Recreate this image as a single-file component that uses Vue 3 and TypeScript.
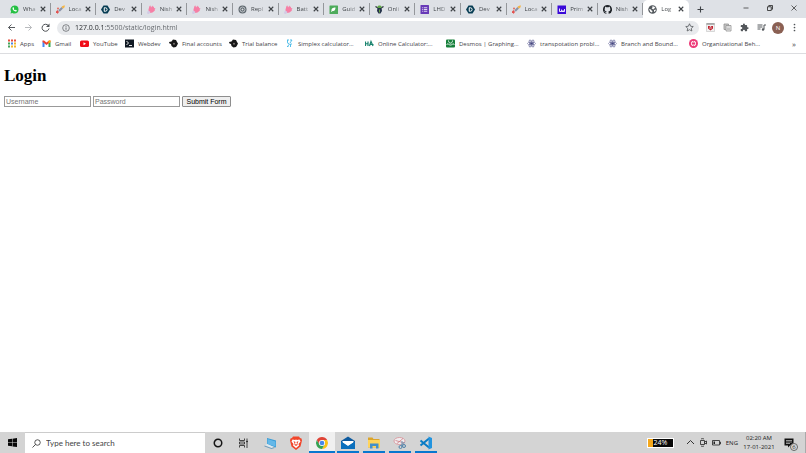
<script setup lang="ts">
import { ref } from 'vue'

interface Entry {
  label: string
  icon: string
}

const tabs: Entry[] = [
  { label: 'Wha', icon: 'whatsapp' },
  { label: 'Loca', icon: 'rocket' },
  { label: 'Dev', icon: 'devpost' },
  { label: 'Nish', icon: 'hand' },
  { label: 'Nish', icon: 'hand' },
  { label: 'Repl', icon: 'replit' },
  { label: 'Batt', icon: 'hand' },
  { label: 'Guid', icon: 'leaf' },
  { label: 'Onli', icon: 'bug' },
  { label: 'LHD', icon: 'forms' },
  { label: 'Dev', icon: 'devpost' },
  { label: 'Loca', icon: 'rocket' },
  { label: 'Prim', icon: 'prime' },
  { label: 'Nish', icon: 'github' },
  { label: 'Log', icon: 'globe' },
]
const activeTab = ref(tabs.length - 1)

const bookmarks: Entry[] = [
  { label: 'Apps', icon: 'apps' },
  { label: 'Gmail', icon: 'gmail' },
  { label: 'YouTube', icon: 'youtube' },
  { label: 'Webdev', icon: 'terminal' },
  { label: 'Final accounts', icon: 'bird' },
  { label: 'Trial balance', icon: 'bird' },
  { label: 'Simplex calculator...', icon: 'simplex' },
  { label: 'Online Calculator:...', icon: 'ha' },
  { label: 'Desmos | Graphing...', icon: 'desmos' },
  { label: 'transpotation probl...', icon: 'atom' },
  { label: 'Branch and Bound...', icon: 'atom' },
  { label: 'Organizational Beh...', icon: 'target' },
]

const extensions: Entry[] = [
  { label: 'Shield', icon: 'shield' },
  { label: 'Copy', icon: 'copy' },
  { label: 'Extensions', icon: 'puzzle' },
  { label: 'Media', icon: 'media' },
]

const tasks = [
  { label: 'Cortana', icon: 'cortana', state: '' },
  { label: 'Task view', icon: 'taskview', state: '' },
  { label: 'This PC', icon: 'pc', state: '' },
  { label: 'Brave', icon: 'brave', state: '' },
  { label: 'Chrome', icon: 'chrome', state: 'open focused' },
  { label: 'Mail', icon: 'mail', state: 'open' },
  { label: 'File Explorer', icon: 'folder', state: 'open' },
  { label: 'Snipping Tool', icon: 'snip', state: 'open' },
  { label: 'Visual Studio Code', icon: 'vscode', state: 'open' },
]

const address = ref('127.0.0.1:5500/static/login.html')
const search = ref('')
const username = ref('')
const password = ref('')
</script>

<template>
  <div class="screen">
    <svg class="sprite" aria-hidden="true">
      <symbol id="whatsapp" viewBox="0 0 18 18"><path fill="#25c043" d="M9 1a8 8 0 0 1 0 16 8 8 0 0 1-4-1l-4 1 1.200-4A8 8 0 0 1 9 1z" /><path fill="#fff" d="M5.500 5l1.800-.5 1 2.300-.9 1.100c.6 1.200 1.500 2 2.800 2.600l1-1.100 2.300 1.100c.2 1.500-1 2.600-2.500 2.500C7.500 12.500 4.800 9 5 6z" /></symbol>
      <symbol id="rocket" viewBox="0 0 18 18"><path fill="#e2524f" d="M0 13l3-3 3 4-3 4-1-2-2 0z" /><path fill="#8a93a8" d="M5 10l6-6 3 3-6 6-1 0-2-2z" /><path fill="#f4b547" d="M11 4c1-2 4-3 7-3-1 3-1 5-4 6z" /><circle cx="4" cy="7" r="2" fill="#e46b5c" /></symbol>
      <symbol id="devpost" viewBox="0 0 18 18"><path fill="#063c53" d="M5 1h8l5 8-5 8H5L0 9z" /><path fill="none" stroke="#fff" stroke-width="2" d="M6.500 5.500h2.200a3.500 3.500 0 0 1 0 7H6.500z" /></symbol>
      <symbol id="hand" viewBox="0 0 18 18"><path fill="#f67fa5" d="M3 9l2-7 2-1 1 4 3-4 1 3 2-1 0 3 3 1-2 3 1 1-5 4-5 1-3-3z" /><path fill="#d3cbe5" d="M0 14l3-3 4 3-3 4H1z" /></symbol>
      <symbol id="replit" viewBox="0 0 18 18"><circle cx="9" cy="9" r="8" fill="#5d666d" /><circle cx="9" cy="9" r="5" fill="none" stroke="#dfe2e5" stroke-width="1.500" /><circle cx="9" cy="9" r="2" fill="#dfe2e5" /></symbol>
      <symbol id="leaf" viewBox="0 0 18 18"><rect x="1" y="1" width="17" height="17" rx="1" fill="#4dab5b" /><path fill="#fff" d="M5 12c-1-5 3-7 8-7 0 5-2 8-6 7l-2 2-1-1z" /></symbol>
      <symbol id="bug" viewBox="0 0 18 18"><path stroke="#252d38" stroke-width="2.500" d="M1 3l5 3M17 3l-5 3" /><path fill="#25334a" d="M5 5h8l1 7-3 5H7l-3-5z" /><path fill="#5fa646" d="M5 3c1-3 7-3 8 0v3H5z" /><path fill="#69a246" d="M8 9h2v6H8z" /></symbol>
      <symbol id="forms" viewBox="0 0 18 18"><rect x="1" y="0" width="17" height="18" rx="1" fill="#6739b7" /><path stroke="#fff" stroke-width="1.600" d="M7.500 5.500h7M7.500 9h7M7.500 12.500h7M4 5.500h1.500M4 9h1.500M4 12.500h1.500" /></symbol>
      <symbol id="prime" viewBox="0 0 18 18"><rect x="1" y="1" width="17" height="17" fill="#3a09d8" /><path fill="none" stroke="#fff" stroke-width="1.800" d="M5 7v6h4V9M9 13h6V8M12 10v3" /></symbol>
      <symbol id="github" viewBox="0 0 16 16"><path fill="#1f2328" d="M8 0a8 8 0 0 0-2.530 15.590c.4.070.55-.17.55-.38v-1.490c-2.230.49-2.700-.94-2.700-.94-.36-.93-.89-1.180-.89-1.180-.73-.5.050-.49.050-.49.810.06 1.230.83 1.230.83.720 1.230 1.880.87 2.330.67.070-.52.280-.88.510-1.080-1.780-.2-3.640-.89-3.640-3.950 0-.87.310-1.590.82-2.150-.08-.2-.36-1.020.08-2.120 0 0 .67-.21 2.200.82a7.600 7.600 0 0 1 4 0c1.530-1.040 2.200-.82 2.200-.82.440 1.100.160 1.920.080 2.120.51.56.82 1.270.82 2.150 0 3.070-1.870 3.750-3.650 3.950.29.25.54.73.54 1.480v2.200c0 .21.150.46.550.38A8 8 0 0 0 8 0z" /></symbol>
      <symbol id="globe" viewBox="0 0 18 18"><circle cx="9" cy="9" r="8.500" fill="#53585d" /><path fill="#fff" d="M2 8l4 1 1 2 2 1-1 3-3-1zM8 3l4 0 3 3-3 1-1 2-4-2 2-1zM12 10l4-1-1 3-3 2z" /></symbol>
      <symbol id="apps" viewBox="0 0 18 18"><path fill="#e84d3d" d="M2 1h4v4H2zM8 1h4v4H8zM14 1h4v4h-4z" /><path fill="#44a45b" d="M2 7h4v4H2zM2 13h4v4H2z" /><path fill="#4c86e7" d="M8 7h4v4H8z" /><path fill="#f0b52a" d="M14 7h4v4h-4zM8 13h4v4H8zM14 13h4v4h-4z" /></symbol>
      <symbol id="gmail" viewBox="0 0 18 18"><path fill="#4285f4" d="M1 5l4 3v8H1z" /><path fill="#34a853" d="M13 8l4-3v11h-4z" /><path fill="#ea4335" d="M1 3h3l5 4 5-4h3v3l-8 6-8-6z" /><path fill="#fbbc04" d="M14 3h3v3l-4 3V4z" /></symbol>
      <symbol id="youtube" viewBox="0 0 18 18"><rect x="0" y="3" width="18" height="13" rx="3" fill="#f00c18" /><path fill="#fff" d="M7 6.500l5 3-5 3z" /></symbol>
      <symbol id="terminal" viewBox="0 0 18 18"><path fill="#111923" d="M0 1h18v16H0z" /><path fill="none" stroke="#fff" stroke-width="1.800" d="M3 4l4 4-4 4M8 13h6" /></symbol>
      <symbol id="bird" viewBox="0 0 18 18"><path fill="#171717" d="M0 6l5-1 3-4 6 1 2 4 2 3-2 4-2 3-5 1-4-3-1-4-3-1z" /><circle cx="10" cy="9.500" r="2" fill="#77716f" /></symbol>
      <symbol id="simplex" viewBox="0 0 18 18"><path fill="none" stroke="#43b8e6" stroke-width="1.800" d="M4 2h4M5 2v5M10 2h4l-4 6M4 7l5 3-4 5M14 10h-3v6M4 15h3" /></symbol>
      <symbol id="ha" viewBox="0 0 18 18"><path fill="none" stroke="#18836d" stroke-width="2.400" d="M1 5v9M6 5v9M1 9.500h5M9 14l3-9 4 9M10 11h7" /></symbol>
      <symbol id="desmos" viewBox="0 0 18 18"><rect x="0" y="1" width="18" height="16" rx="2" fill="#16803b" /><path fill="none" stroke="#fff" stroke-width="1.800" d="M1 12c3-5 4 0 8 0s5-5 8 0M5 3c0 7 8 7 8 0" /></symbol>
      <symbol id="atom" viewBox="0 0 18 18"><g fill="none" stroke="#6a6b9c" stroke-width="1.300"><ellipse cx="9" cy="9" rx="8" ry="3" /><ellipse cx="9" cy="9" rx="8" ry="3" transform="rotate(60 9 9)" /><ellipse cx="9" cy="9" rx="8" ry="3" transform="rotate(120 9 9)" /></g><circle cx="9" cy="9" r="2.500" fill="#44457e" /></symbol>
      <symbol id="target" viewBox="0 0 18 18"><circle cx="9" cy="9" r="9" fill="#ed3c79" /><path fill="none" stroke="#fff" stroke-width="1.600" d="M5 6h8v6H5zM7 4v2M11 4v2M7 12v2M11 12v2" /></symbol>
      <symbol id="shield" viewBox="0 0 18 18"><path fill="#f2f2f2" stroke="#b5b5b5" d="M1 1h16v16H1z" /><path fill="#777" d="M1 1h16v2H1z" /><path fill="#c12532" d="M4 6l3 0 2 2 2-2 3 0v5l-5 4-5-4z" /><path stroke="#fff" stroke-width="1.200" d="M6 10h6" /></symbol>
      <symbol id="copy" viewBox="0 0 18 18"><path fill="#c8c8c8" stroke="#8c8c8c" stroke-width="1.500" d="M2 2h9v11H2z" /><path fill="#eee" stroke="#8c8c8c" stroke-width="1.500" d="M6 5h10v11H6z" /><path stroke="#999" d="M8 8h6M8 11h6M8 13h6" /></symbol>
      <symbol id="puzzle" viewBox="0 0 24 24"><path fill="#53575b" d="M20.500 11H19V7a2 2 0 0 0-2-2h-4V3.500a2.500 2.500 0 0 0-5 0V5H4a2 2 0 0 0-2 2v3.800h1.500a2.700 2.700 0 0 1 0 5.400H2V20a2 2 0 0 0 2 2h3.800v-1.500a2.700 2.700 0 0 1 5.400 0V22H17a2 2 0 0 0 2-2v-4h1.500a2.500 2.500 0 0 0 0-5z" /></symbol>
      <symbol id="media" viewBox="0 0 18 18"><path fill="none" stroke="#55595d" stroke-width="2" d="M1 4h10M1 8h10M1 12h6M14 13V4h4" /><circle cx="12" cy="13" r="2.500" fill="#55595d" /></symbol>
      <symbol id="close" viewBox="0 0 12 12"><path stroke="#3f4347" stroke-width="2.200" d="M1.500 1.500l9 9M10.500 1.500l-9 9" /></symbol>
      <symbol id="plus" viewBox="0 0 14 14"><path stroke="#3f4347" stroke-width="2.200" d="M7 1v12M1 7h12" /></symbol>
      <symbol id="minimize" viewBox="0 0 12 12"><path stroke="#333" stroke-width="1.500" d="M1 6h10" /></symbol>
      <symbol id="restore" viewBox="0 0 12 12"><path fill="none" stroke="#222" stroke-width="1.600" d="M1 3.500h7.500V11H1zM3.500 3V1H11v7.500H9" /></symbol>
      <symbol id="exit" viewBox="0 0 12 12"><path stroke="#333" stroke-width="1.500" d="M1 1l10 10M11 1L1 11" /></symbol>
      <symbol id="back" viewBox="0 0 18 18"><path fill="none" stroke="#505458" stroke-width="1.900" d="M16 9H3M9 3L3 9l6 6" /></symbol>
      <symbol id="forward" viewBox="0 0 18 18"><path fill="none" stroke="#b5b7ba" stroke-width="1.900" d="M2 9h13M9 3l6 6-6 6" /></symbol>
      <symbol id="reload" viewBox="0 0 18 18"><path fill="none" stroke="#505458" stroke-width="2" d="M14.500 5A7 7 0 1 0 16 11" /><path fill="#505458" d="M17 1v7h-7z" /></symbol>
      <symbol id="info" viewBox="0 0 18 18"><circle cx="9" cy="9" r="7.500" fill="none" stroke="#5f6368" stroke-width="1.700" /><path stroke="#5f6368" stroke-width="2" d="M9 8v5M9 5v2" /></symbol>
      <symbol id="star" viewBox="0 0 18 18"><path fill="none" stroke="#55595d" stroke-width="1.600" stroke-linejoin="round" d="M9 1.500l2.300 5 5.200.6-3.900 3.600 1.100 5.300L9 13.400 4.300 16l1.100-5.300L1.500 7.100l5.200-.6z" /></symbol>
      <symbol id="dots" viewBox="0 0 18 18"><g fill="#505458"><circle cx="9" cy="3" r="1.700" /><circle cx="9" cy="9" r="1.700" /><circle cx="9" cy="15" r="1.700" /></g></symbol>
      <symbol id="windows" viewBox="0 0 18 18"><path fill="#080808" d="M0 2.500L8 1.400v7.200H0zM9 1.300L18 0v8.600H9zM0 9.500h8v7.200l-8-1.100zM9 9.500h9V18l-9-1.200z" /></symbol>
      <symbol id="magnifier" viewBox="0 0 18 18"><circle cx="11" cy="7" r="5.500" fill="none" stroke="#222" stroke-width="1.500" /><path stroke="#222" stroke-width="1.600" d="M7 11l-6 6" /></symbol>
      <symbol id="cortana" viewBox="0 0 28 28"><circle cx="14" cy="14" r="7.500" fill="none" stroke="#161616" stroke-width="3" /></symbol>
      <symbol id="taskview" viewBox="0 0 28 28"><path fill="none" stroke="#333" stroke-width="1.800" d="M5 5v4h10V5M5 23v-4h10v4M5 12h10v4H5zM20 5v3M20 14v10" /><path fill="#333" d="M18 9h4v4h-4z" /></symbol>
      <symbol id="pc" viewBox="0 0 28 28"><path fill="#379cd7" d="M8 4l18 5v14L8 17z" /><path fill="#65b8e8" d="M9 6l16 5v10L9 16z" /><path fill="#dfe9ef" d="M4 18l5-2 13 6-5 2z" /><path fill="#6e9cbb" d="M3 19l14 5 6-2v2l-6 2-14-5z" /></symbol>
      <symbol id="brave" viewBox="0 0 28 28"><path fill="#f1462b" d="M8 1h12l2 3 3 1 1 4-3 12-9 7-9-7L2 9l1-4 3-1z" /><path fill="#fff" d="M7 7l5 1 2-1 2 1 5-1 2 4-4 5 1 3-6 5-6-5 1-3-4-5z" /><path fill="#f1462b" d="M9 10l4 2-1 4 2 1 2-1-1-4 4-2-2 5 0 3-3 2-3-2 0-3z" /></symbol>
      <symbol id="chrome" viewBox="0 0 28 28"><path fill="#df4437" d="M3.600 8A12 12 0 0 1 24.400 8H14l-5.200 9z" /><path fill="#fbc116" d="M24.400 8A12 12 0 0 1 14 26l5.200-9A6 6 0 0 0 14 8z" /><path fill="#35a353" d="M3.600 8A12 12 0 0 0 14 26l5.200-9H8.800z" /><circle cx="14" cy="14" r="6" fill="#fff" /><circle cx="14" cy="14" r="4.700" fill="#4788e8" /></symbol>
      <symbol id="mail" viewBox="0 0 28 28"><path fill="#0d5a9f" d="M0 10L14 1l14 9v16H0z" /><path fill="#fff" d="M3 10h22v3l-11 8-11-8z" /><path fill="#0c70bd" d="M0 11l14 9 14-9v15H0z" /></symbol>
      <symbol id="folder" viewBox="0 0 28 28"><path fill="#dca52b" d="M2 3h9l2 3h12v17H2z" /><path fill="#ffd45b" d="M2 8h24v15H2z" /><path fill="#428fca" d="M6 15h17v10h-5v-5h-7v5H6z" /></symbol>
      <symbol id="snip" viewBox="0 0 28 28"><ellipse cx="13" cy="10" rx="11" ry="7" fill="#f0edf0" stroke="#d98b90" stroke-width="1.500" /><path fill="none" stroke="#c9757c" stroke-width="1.500" d="M5 9l18 5M8 15L20 5" /><path fill="none" stroke="#6b96b5" stroke-width="2" d="M18 10l0 10M23 12l-8 8" /><circle cx="15" cy="22" r="3" fill="none" stroke="#4f82aa" stroke-width="2" /><circle cx="22" cy="20" r="3" fill="none" stroke="#4f82aa" stroke-width="2" /></symbol>
      <symbol id="vscode" viewBox="0 0 28 28"><path fill="none" stroke="#087bc5" stroke-width="4" stroke-linejoin="round" d="M3 9l17 14M3 19L20 5" /><path fill="#2294df" d="M19 1l7 3v20l-7 3z" /></symbol>
      <symbol id="chevron" viewBox="0 0 18 18"><path fill="none" stroke="#222" stroke-width="1.800" d="M2 12l7-7 7 7" /></symbol>
      <symbol id="meet" viewBox="0 0 18 18"><path fill="none" stroke="#222" stroke-width="1.600" d="M3 5h8v8H3zM11 8l4-2v6l-4-2M4 2c2-1 4-1 6 0M4 16c2 1 4 1 6 0" /></symbol>
      <symbol id="power" viewBox="0 0 18 18"><path fill="none" stroke="#222" stroke-width="1.600" d="M1 5h14v9H1zM16 8h1v4h-1" /><path fill="#222" d="M3 7h3v5H3z" /></symbol>
      <symbol id="notes" viewBox="0 0 20 20"><path fill="#111" d="M1 1h18v14h-7l-4 4v-4H1z" /><path stroke="#ddd" stroke-width="1.300" d="M4 5h12M4 8h12M4 11h8" /></symbol>
    </svg>

    <header class="browser">
      <div class="tab-strip">
        <nav class="tabs" aria-label="Tabs">
          <div v-for="(tab, i) in tabs" :key="i" class="tab" :class="{ active: i === activeTab }">
            <button class="tab-title" type="button" @click="activeTab = i">
              <svg class="icon"><use :href="'#' + tab.icon" /></svg>
              <span class="tab-label">{{ tab.label }}</span>
            </button>
            <button class="tab-close" type="button" aria-label="Close tab"><svg><use href="#close" /></svg></button>
          </div>
        </nav>
        <div class="window-bar">
          <button class="new-tab" type="button" aria-label="New tab"><svg><use href="#plus" /></svg></button>
          <div class="window-buttons">
            <button type="button" aria-label="Minimize"><svg><use href="#minimize" /></svg></button>
            <button type="button" aria-label="Restore"><svg><use href="#restore" /></svg></button>
            <button type="button" aria-label="Close"><svg><use href="#exit" /></svg></button>
          </div>
        </div>
      </div>

      <div class="toolbar">
        <div class="history">
          <button type="button" aria-label="Back"><svg class="icon"><use href="#back" /></svg></button>
          <button type="button" aria-label="Forward"><svg class="icon"><use href="#forward" /></svg></button>
          <button type="button" aria-label="Reload"><svg class="icon"><use href="#reload" /></svg></button>
        </div>
        <div class="omnibox">
          <svg class="info"><use href="#info" /></svg>
          <input v-model="address" class="address" type="text" aria-label="Address" spellcheck="false" />
          <button type="button" aria-label="Bookmark this page"><svg class="icon"><use href="#star" /></svg></button>
        </div>
        <div class="extensions">
          <button v-for="ext in extensions" :key="ext.icon" type="button" :aria-label="ext.label">
            <svg class="icon"><use :href="'#' + ext.icon" /></svg>
          </button>
          <button class="avatar" type="button">N</button>
          <button type="button" aria-label="Menu"><svg class="icon"><use href="#dots" /></svg></button>
        </div>
      </div>

      <nav class="bookmarks" aria-label="Bookmarks">
        <a v-for="mark in bookmarks" :key="mark.label" href="#">
          <svg class="icon"><use :href="'#' + mark.icon" /></svg>
          <span>{{ mark.label }}</span>
        </a>
        <button class="more" type="button">»</button>
      </nav>
    </header>

    <main class="page">
      <h1>Login</h1>
      <form @submit.prevent>
        <input v-model="username" type="text" placeholder="Username" aria-label="Username" />
        <input v-model="password" type="password" placeholder="Password" aria-label="Password" />
        <button type="submit">Submit Form</button>
      </form>
    </main>

    <footer class="taskbar">
      <button class="start" type="button" aria-label="Start"><svg class="icon"><use href="#windows" /></svg></button>
      <label class="search">
        <svg class="icon"><use href="#magnifier" /></svg>
        <input v-model="search" type="text" placeholder="Type here to search" aria-label="Search" />
      </label>
      <div class="tasks">
        <button v-for="task in tasks" :key="task.icon" type="button" :class="task.state" :aria-label="task.label">
          <svg><use :href="'#' + task.icon" /></svg>
        </button>
      </div>
      <div class="tray">
        <div class="battery">24%</div>
        <div class="tray-icons">
          <svg class="icon"><use href="#chevron" /></svg>
          <svg class="icon"><use href="#meet" /></svg>
          <svg class="icon"><use href="#power" /></svg>
        </div>
        <span class="lang">ENG</span>
        <div class="clock"><span>02:20 AM</span><span>17-01-2021</span></div>
        <button class="notes" type="button" aria-label="Notifications">
          <svg><use href="#notes" /></svg>
          <span class="count">6</span>
        </button>
      </div>
    </footer>
  </div>
</template>

<style>
body {
  background: #fff;
}
</style>

<style scoped>
.screen {
  display: flex;
  flex-direction: column;
  min-height: 100vh;
  font-family: 'Open Sans', 'Noto Sans', sans-serif;
  font-size: 6px;
  color: #3f4347;
}
.screen *,
.screen *::before {
  box-sizing: border-box;
}
.sprite {
  display: none;
}
button,
input {
  margin: 0;
  padding: 0;
  border: 0;
  background: none;
  font: inherit;
  color: inherit;
}
button {
  display: flex;
  align-items: center;
  justify-content: center;
}
svg {
  display: block;
  flex: none;
}
.icon {
  width: 9px;
  height: 9px;
}

/* Tab strip */
.tab-strip {
  display: flex;
  height: 18px;
  background: #dee1e6;
}
.tabs {
  display: flex;
  flex: 1;
  min-width: 0;
  padding-left: 5px;
}
.tab {
  display: flex;
  align-items: center;
  flex: 1 1 0;
  min-width: 0;
  padding: 0 5px;
  background: linear-gradient(#94979b, #94979b) right center / 1px 12px no-repeat;
}
.tab.active {
  background: #fff;
  border-radius: 5px 5px 0 0;
}
.tab-title {
  flex: 1;
  min-width: 0;
  gap: 4px;
}
.tab-label {
  flex: 1;
  text-align: left;
  white-space: nowrap;
  mask-image: linear-gradient(90deg, #000 40%, rgb(0 0 0 / 15%));
}
.tab-close svg {
  width: 6px;
  height: 6px;
}
.tab-close {
  margin-left: 2px;
}
.window-bar {
  display: flex;
  flex: 0 0 117px;
  align-items: center;
  justify-content: space-between;
  padding: 0 9px 0 8px;
}
.new-tab svg {
  width: 7px;
  height: 7px;
}
.window-buttons {
  display: flex;
  gap: 18px;
  padding-bottom: 2px;
}
.window-buttons svg {
  width: 6px;
  height: 6px;
}

/* Toolbar */
.toolbar {
  display: flex;
  align-items: center;
  height: 19px;
  padding: 0 7px;
}
.history {
  display: flex;
  gap: 8px;
  flex: 0 0 50px;
}
.omnibox {
  display: flex;
  align-items: center;
  flex: 1;
  height: 14px;
  padding: 0 5px;
  border-radius: 7px;
  background: #e8eaed;
}
.info {
  width: 8px;
  height: 8px;
}
.address {
  flex: 1;
  min-width: 0;
  padding-left: 5px;
  font-size: 7px;
  color: transparent;
  background: linear-gradient(90deg, #222528 34px, #5f6368 34px);
  background-clip: text;
}
.extensions {
  display: flex;
  align-items: center;
  gap: 8px;
  padding-left: 7px;
}
.avatar {
  width: 12px;
  height: 12px;
  margin: 0 -2px;
  border-radius: 50%;
  background: #8a6053;
  color: #fff;
}

/* Bookmarks bar */
.bookmarks {
  display: grid;
  grid-template-columns: 35px 38px 45px 44px 60px 56px 80px repeat(4, 81px) 1fr auto;
  align-items: center;
  height: 17px;
  padding: 0 10px 3px 7px;
  border-bottom: 1px solid #dcdde0;
}
.bookmarks a {
  display: flex;
  align-items: center;
  gap: 4px;
  color: inherit;
  text-decoration: none;
  white-space: nowrap;
}
.more {
  font-size: 8px;
}

/* Login page */
.page {
  flex: 1;
  padding: 11px 4px;
  color: #000;
}
h1 {
  margin: 0 0 10px;
  font: bold 17px/21px 'Liberation Serif', serif;
}
form {
  display: flex;
  gap: 2px;
  font: 7px/9px 'Liberation Sans', sans-serif;
}
form input {
  width: 87px;
  height: 11px;
  padding: 0 1px;
  border: 1px solid #999;
  background: #fff;
}
form button {
  width: 49px;
  height: 11px;
  border: 1px solid #8e8e8e;
  border-radius: 1px;
  background: #efefef;
  white-space: nowrap;
}
form input::placeholder {
  color: #757575;
}

/* Taskbar */
.taskbar {
  display: flex;
  height: 21px;
  background: #d4d4d4;
  color: #222;
}
.start {
  flex: 0 0 25px;
}
.search {
  display: flex;
  align-items: center;
  flex: 0 1 180px;
  gap: 5px;
  padding: 0 7px;
  border-top: 1px solid #ccc;
  background: #fff;
}
.search input {
  flex: 1;
  min-width: 0;
  font-family: Lato, sans-serif;
  font-size: 8px;
}
.search input::placeholder {
  color: #444;
}
.tasks {
  display: flex;
}
.tasks button {
  width: 26px;
}
.tasks svg {
  width: 14px;
  height: 14px;
}
.tasks .open {
  background: linear-gradient(#0877cf, #0877cf) center bottom / 22px 2px no-repeat;
}
.tasks .focused {
  background-color: #f0f0f0;
  background-size: 26px 2px;
}
.tray {
  display: flex;
  align-items: center;
  margin-left: auto;
}
.battery {
  width: 27px;
  height: 10px;
  margin-right: 12px;
  border: 1px solid #fff;
  background: linear-gradient(90deg, #f5a81c 5px, #080808 5px);
  color: #fff;
  font-size: 7px;
  line-height: 8px;
  text-align: center;
}
.tray-icons {
  display: flex;
  gap: 4px;
}
.lang {
  margin-left: 5px;
}
.clock {
  display: flex;
  flex-direction: column;
  width: 42px;
  line-height: 9px;
  text-align: center;
}
.notes {
  position: relative;
  width: 26px;
  height: 21px;
  padding-right: 8px;
  border-right: 1px solid #aaa;
}
.notes svg {
  width: 10px;
  height: 10px;
}
.count {
  position: absolute;
  right: 7px;
  bottom: 2px;
  width: 8px;
  height: 8px;
  border: 1px solid #666;
  border-radius: 50%;
  background: #ddd;
  line-height: 6px;
}
</style>
